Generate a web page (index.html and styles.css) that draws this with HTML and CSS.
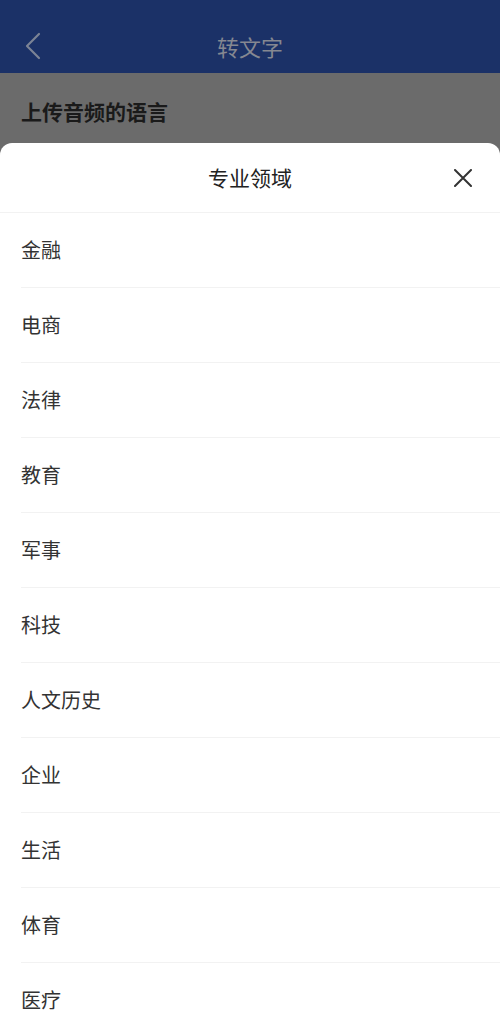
FILE: index.html
```html
<!DOCTYPE html>
<html lang="zh-CN">
<head>
<meta charset="utf-8">
<title>专业领域</title>
<link rel="stylesheet" href="styles.css">
</head>
<body>
<div class="page">
  <header class="topbar">
    <svg class="back" width="18" height="28" viewBox="0 0 18 28"><path d="M15 2 L3 14 L15 26" fill="none" stroke="#7c8395" stroke-width="2.2" stroke-linecap="round" stroke-linejoin="round"/></svg>
    <div class="topbar-title">转文字</div>
  </header>
  <div class="behind">
    <div class="behind-label">上传音频的语言</div>
  </div>
  <div class="sheet">
    <div class="sheet-head">
      <div class="sheet-title">专业领域</div>
      <svg class="close" width="18" height="18" viewBox="0 0 18 18"><path d="M1 1 L17 17 M17 1 L1 17" fill="none" stroke="#333" stroke-width="2" stroke-linecap="round"/></svg>
    </div>
    <ul class="list">
      <li class="item">金融</li>
      <li class="item">电商</li>
      <li class="item">法律</li>
      <li class="item">教育</li>
      <li class="item">军事</li>
      <li class="item">科技</li>
      <li class="item">人文历史</li>
      <li class="item">企业</li>
      <li class="item">生活</li>
      <li class="item">体育</li>
      <li class="item">医疗</li>
    </ul>
  </div>
</div>
</body>
</html>
```

FILE: styles.css
```css
html, body {
  margin: 0;
  padding: 0;
}
body {
  width: 500px;
  height: 1018px;
  overflow: hidden;
  background: #6b6b6b;
  font-family: "Noto Sans CJK SC", "Noto Sans", sans-serif;
}
.page {
  display: flex;
  flex-direction: column;
  width: 500px;
  height: 1018px;
}
.topbar {
  position: relative;
  height: 73px;
  flex: none;
  box-sizing: border-box;
  padding-top: 19px;
  background: #1b3167;
  display: flex;
  align-items: center;
  justify-content: center;
}
.back {
  position: absolute;
  left: 24px;
  top: 32px;
}
.topbar-title {
  color: #858891;
  font-size: 22px;
  line-height: 1;
}
.behind {
  height: 70px;
  flex: none;
  padding-left: 21px;
  box-sizing: border-box;
  padding-top: 28px;
}
.behind-label {
  font-size: 21px;
  font-weight: 700;
  color: #1a1a1a;
  line-height: 1;
}
.sheet {
  flex: 1;
  background: #fff;
  border-radius: 12px 12px 0 0;
}
.sheet-head {
  position: relative;
  height: 69px;
  border-bottom: 1px solid #f2f2f2;
  display: flex;
  align-items: center;
  justify-content: center;
}
.sheet-title {
  font-size: 21px;
  color: #222;
  line-height: 1;
}
.close {
  position: absolute;
  right: 28px;
  top: 26px;
}
.list {
  list-style: none;
  margin: 0;
  padding: 0 0 0 21px;
}
.item {
  height: 74px;
  border-bottom: 1px solid #f2f2f2;
  display: flex;
  align-items: center;
  font-size: 20px;
  color: #333;
  line-height: 1;
}
```
